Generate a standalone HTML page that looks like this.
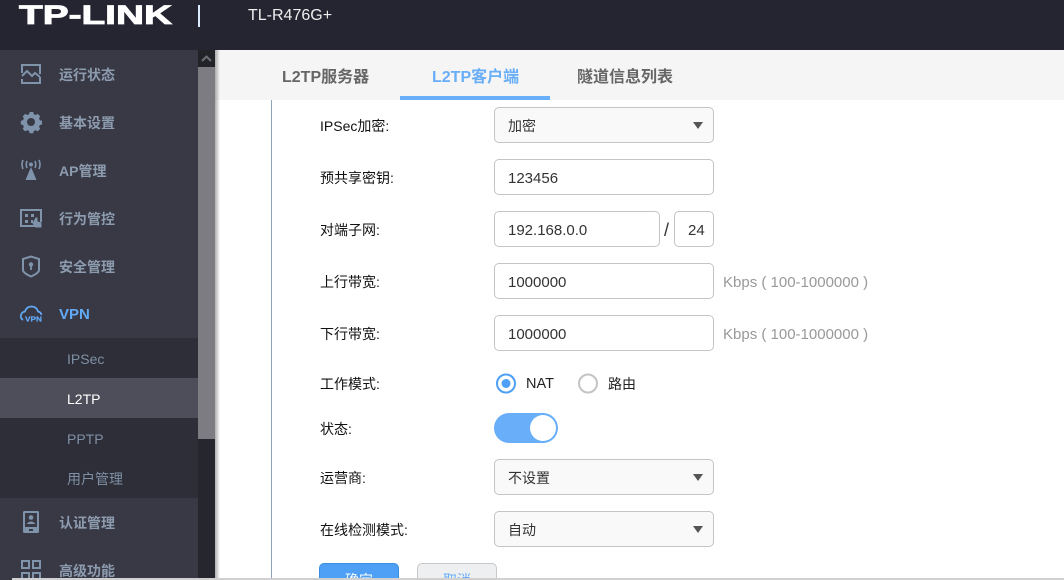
<!DOCTYPE html>
<html lang="zh">
<head>
<meta charset="utf-8">
<title>TL-R476G+</title>
<style>
html,body{margin:0;padding:0;width:1064px;height:580px;overflow:hidden;background:#fff}
body{position:relative;font-family:"Liberation Sans","Noto Sans CJK SC",sans-serif;font-size:14px;color:#222}
.a{position:absolute}
.t{position:absolute;white-space:nowrap;line-height:20px}
#hdr{left:0;top:0;width:1064px;height:50px;background:#252532}
#side{left:0;top:50px;width:198px;height:530px;background:#393946}
#sub{left:0;top:338px;width:198px;height:160px;background:#2e2e38}
#subsel{left:0;top:378px;width:198px;height:40px;background:#4e4e5a}
#track{left:198px;top:50px;width:17px;height:530px;background:#26262e}
#thumb{left:198px;top:67px;width:17px;height:372px;background:#7d7c83}
#up{left:198px;top:50px;width:17px;height:17px;background:#222229}
#shadow{left:215px;top:50px;width:5px;height:530px;background:linear-gradient(90deg,rgba(120,120,120,.6),rgba(255,255,255,0))}
#tabs{left:215px;top:50px;width:849px;height:50px;background:#f5f5f5}
#tabline{left:400px;top:96px;width:150px;height:4px;background:#68aef8}
#vline{left:271px;top:100px;width:1px;height:480px;background:#8fa2b8}
.nav{font-weight:bold;color:#8c9cae;left:59px}
.subn{color:#7f90a5;left:67px}
.tab{font-size:16px;font-weight:bold;color:#666}
.lb{left:320px;color:#111}
.box{position:absolute;box-sizing:border-box;height:36px;border:1px solid #c4c4c4;border-radius:5px;background:#fff;line-height:36px;padding-left:13px;color:#333;white-space:nowrap}
.n{font-size:15px;line-height:37px}
.sel{background:#f9f9f9;left:494px;width:220px}
.sel:after{content:"";position:absolute;right:10px;top:14px;border-left:5px solid transparent;border-right:5px solid transparent;border-top:7px solid #555}
.hint{left:723px;color:#999;font-size:15px}
svg{position:absolute;overflow:visible}
.ic{fill:none;stroke:#7f93ab;stroke-width:2}
</style>
</head>
<body>
<div class="a" id="hdr"></div>
<svg style="left:0;top:0" width="200" height="30"><text transform="translate(19 24) scale(1 1.08)" font-family="Liberation Sans" font-weight="bold" font-size="25" fill="#fff" stroke="#fff" stroke-width=".8" textLength="153" lengthAdjust="spacingAndGlyphs">TP-LINK</text></svg>
<div class="a" style="left:198px;top:5px;width:2px;height:22px;background:#dcebfb"></div>
<div class="t" style="left:248px;top:6px;color:#eee;font-size:16px">TL-R476G+</div>

<div class="a" id="side"></div>
<div class="a" id="sub"></div>
<div class="a" id="subsel"></div>
<div class="a" id="track"></div>
<div class="a" id="thumb"></div>
<div class="a" id="up"></div>
<svg style="left:198px;top:50px" width="17" height="17"><path d="M4 11 8.500 6.500 13 11" fill="none" stroke="#6e6e74" stroke-width="2"/></svg>

<div class="t nav" style="top:65px">运行状态</div>
<div class="t nav" style="top:113px">基本设置</div>
<div class="t nav" style="top:161px">AP管理</div>
<div class="t nav" style="top:209px">行为管控</div>
<div class="t nav" style="top:257px">安全管理</div>
<div class="t nav" style="top:305px;color:#62aaf5;font-size:15px">VPN</div>
<div class="t subn" style="top:349px">IPSec</div>
<div class="t subn" style="top:389px;color:#fff">L2TP</div>
<div class="t subn" style="top:429px">PPTP</div>
<div class="t subn" style="top:469px">用户管理</div>
<div class="t nav" style="top:513px">认证管理</div>
<div class="t nav" style="top:561px">高级功能</div>

<svg style="left:0;top:50px" width="60" height="530">
<path class="ic" d="M22 23v-8h18v9M40 27v6H22v-4M22 26l5-5 5 5 3-3 5 4"/>
<path d="M28.500 61h5l.7 3 2.600 1.100 2.700-1.600 3.500 3.500-1.600 2.700 1.100 2.600 3 .7v5l-3 .7-1.100 2.600 1.600 2.700-3.500 3.500-2.700-1.600-2.600 1.100-.7 3h-5l-.7-3-2.600-1.100-2.700 1.600-3.500-3.500 1.600-2.700-1.100-2.600-3-.7v-5l3-.7 1.100-2.600-1.600-2.700 3.500-3.500 2.700 1.600 2.600-1.100z" fill="#7f93ab" transform="translate(8.800 17.500) scale(.73)"/><circle cx="31" cy="72" r="4" fill="#393946"/>
<path d="M31 117l-5.500 13h11z" fill="#7f93ab"/><circle cx="31" cy="114.500" r="2" fill="#7f93ab"/>
<path class="ic" d="M27 111q-1.500 3.500 0 7M35 111q1.500 3.500 0 7M23 110q-2 4.500 0 9M39 110q2 4.500 0 9" style="stroke-width:1.600"/>
<path class="ic" d="M35 176H21v-16h20v12"/><path d="M25 164h3v3h-3zM31 164h3v3h-3zM25 170h3v3h-3zM31 170h2v3h-2z" fill="#7f93ab"/><path d="M35.500 167.500h2v4l4 1v5h-6l-3-4z" fill="#7f93ab"/>
<path class="ic" d="M23 209l8-2.500 8 2.500v11q0 3-8 6.500-8-3.500-8-6.500z"/><circle cx="31" cy="214.500" r="2.200" fill="#7f93ab"/><path d="M31 215v5" stroke="#7f93ab" stroke-width="1.800"/>
<path d="M23 270q-3-2-2-5 .7-3 4-3.500 1.500-5 6.500-5 5 0 6.500 5 3 .5 3.500 3.500" fill="none" stroke="#62aaf5" stroke-width="1.700"/>
<text x="25" y="271.500" font-family="Liberation Sans" font-weight="bold" font-size="7.500" fill="#62aaf5" stroke="#62aaf5" stroke-width=".2" textLength="17" lengthAdjust="spacingAndGlyphs">VPN</text>
<rect x="23" y="461" width="16" height="22" rx="1.500" fill="#7f93ab"/><rect x="25" y="463" width="12" height="14" fill="#393946"/><circle cx="31" cy="467.500" r="2.300" fill="#7f93ab"/><path d="M26.500 474q4.500-5 9 0z" fill="#7f93ab"/><rect x="29" y="479" width="4" height="2" fill="#393946"/>
<path class="ic" d="M22 511h7v7h-7zM33 511h7v7h-7zM22 523h7v7h-7zM33 523h7v7h-7z"/>
</svg>

<div class="a" id="tabs"></div>
<div class="a" id="tabline"></div>
<div class="t tab" style="left:282px;top:68px">L2TP服务器</div>
<div class="t tab" style="left:432px;top:68px;color:#68aef8">L2TP客户端</div>
<div class="t tab" style="left:577px;top:68px">隧道信息列表</div>
<div class="a" id="shadow"></div>
<div class="a" id="vline"></div>

<div class="t lb" style="top:116px">IPSec加密:</div>
<div class="box sel" style="top:107px">加密</div>
<div class="t lb" style="top:168px">预共享密钥:</div>
<div class="box n" style="left:494px;top:159px;width:220px">123456</div>
<div class="t lb" style="top:220px">对端子网:</div>
<div class="box n" style="left:494px;top:211px;width:166px">192.168.0.0</div>
<div class="t" style="left:664px;top:220px;font-size:18px;color:#333">/</div>
<div class="box n" style="left:674px;top:211px;width:40px">24</div>
<div class="t lb" style="top:272px">上行带宽:</div>
<div class="box n" style="left:494px;top:263px;width:220px">1000000</div>
<div class="t hint" style="top:273px">Kbps ( 100-1000000 )</div>
<div class="t lb" style="top:324px">下行带宽:</div>
<div class="box n" style="left:494px;top:315px;width:220px">1000000</div>
<div class="t hint" style="top:325px">Kbps ( 100-1000000 )</div>
<div class="t lb" style="top:374px">工作模式:</div>
<svg style="left:494px;top:371px" width="110" height="24">
<circle cx="12" cy="12.500" r="9" fill="#fff" stroke="#4da0f5" stroke-width="2"/><circle cx="12" cy="12.500" r="4.500" fill="#4da0f5"/>
<circle cx="94" cy="12.500" r="9" fill="#fff" stroke="#c4c4c4" stroke-width="2"/>
</svg>
<div class="t" style="left:526px;top:374px;font-size:14.500px">NAT</div>
<div class="t" style="left:608px;top:374px">路由</div>
<div class="t lb" style="top:419px">状态:</div>
<div class="a" style="left:494px;top:413px;width:64px;height:30px;border-radius:15px;background:#68aef8"></div>
<div class="a" style="left:530px;top:415px;width:26px;height:26px;border-radius:13px;background:#fff"></div>
<div class="t lb" style="top:468px">运营商:</div>
<div class="box sel" style="top:459px">不设置</div>
<div class="t lb" style="top:520px">在线检测模式:</div>
<div class="box sel" style="top:511px">自动</div>
<div class="a" style="left:319px;top:563px;width:80px;height:30px;box-sizing:border-box;background:#4da0f5;border:1px solid #3b8ee0;border-radius:5px;color:#fff;text-align:center;line-height:32px">确定</div>
<div class="a" style="left:417px;top:563px;width:80px;height:30px;box-sizing:border-box;background:#eeeff1;border:1px solid #c8c8c8;border-radius:5px;color:#68aef8;text-align:center;line-height:32px">取消</div>
<div class="a" style="left:12px;top:578px;width:1052px;height:2px;background:#d0d0d0"></div>
</body>
</html>
